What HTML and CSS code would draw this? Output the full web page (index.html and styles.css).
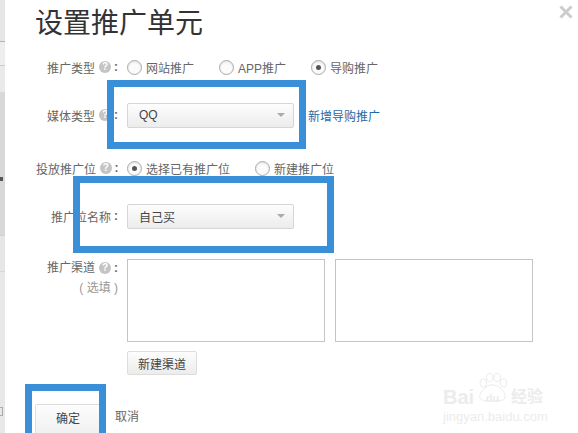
FILE: index.html
```html
<!DOCTYPE html>
<html lang="zh">
<head>
    <meta charset="UTF-8">
    <title>设置推广单元</title>
    <link rel="stylesheet" href="styles.css">
</head>
<body>
    <div class="page">
        <div class="side-strip">
            <span class="strip-part strip-a"></span>
            <span class="strip-part strip-b"></span>
            <span class="strip-part strip-c"></span>
            <span class="strip-part strip-d"><i class="strip-glyph"></i></span>
            <span class="strip-part strip-e"></span>
            <span class="strip-part strip-f"><i class="strip-glyph-box"></i></span>
        </div>

        <main class="dialog">
            <h1 class="dialog-title">设置推广单元</h1>
            <svg class="close-icon" viewBox="0 0 14 14"><path d="M1.5 1.5l11 11M12.5 1.5l-11 11"></path></svg>

            <div class="form-row row-type">
                <div class="form-label">推广类型<span class="help">?</span><span class="colon">:</span></div>
                <div class="radio-group">
                    <label class="radio-item gap-25"><span class="radio"></span>网站推广</label>
                    <label class="radio-item gap-25"><span class="radio"></span>APP推广</label>
                    <label class="radio-item"><span class="radio checked"></span>导购推广</label>
                </div>
            </div>

            <div class="form-row row-media">
                <div class="form-label">媒体类型<span class="help">?</span><span class="colon">:</span></div>
                <div class="select"><span>QQ</span><i class="caret"></i></div>
                <a class="link-new" href="#">新增导购推广</a>
            </div>

            <div class="form-row row-place">
                <div class="form-label">投放推广位<span class="help">?</span><span class="colon">:</span></div>
                <div class="radio-group">
                    <label class="radio-item gap-25"><span class="radio checked"></span>选择已有推广位</label>
                    <label class="radio-item"><span class="radio"></span>新建推广位</label>
                </div>
            </div>

            <div class="form-row row-name">
                <div class="form-label">推广位名称<span class="colon">:</span></div>
                <div class="select"><span>自己买</span><i class="caret"></i></div>
            </div>

            <div class="form-row row-channel">
                <div class="form-label label-stack">
                    <div>推广渠道<span class="help">?</span><span class="colon">:</span></div>
                    <div class="optional">( 选填 )</div>
                </div>
                <div class="channel-boxes">
                    <div class="channel-box"></div>
                    <div class="channel-box"></div>
                </div>
            </div>

            <div class="row-new-channel">
                <button class="btn btn-channel">新建渠道</button>
            </div>

            <div class="form-actions">
                <button class="btn btn-ok">确定</button>
                <a class="link-cancel" href="#">取消</a>
            </div>
        </main>

        <div class="mark mark-media"></div>
        <div class="mark mark-name"></div>
        <div class="mark mark-ok"></div>

        <div class="watermark">
            <svg class="paw" viewBox="0 0 34 32">
                <ellipse cx="7" cy="11" rx="3.5" ry="4.5"></ellipse>
                <ellipse cx="14" cy="5" rx="3.5" ry="4.5"></ellipse>
                <ellipse cx="22" cy="5" rx="3.5" ry="4.5"></ellipse>
                <ellipse cx="29" cy="11" rx="3.5" ry="4.5"></ellipse>
                <path d="M17 13c6 0 14 7 14 13 0 4-5 5-14 5S3 30 3 26c0-6 8-13 14-13z"></path>
            </svg>
            <div class="wm-brand"><span class="wm-bai">Bai</span><span class="wm-du">du</span><span class="wm-cn">经验</span></div>
            <div class="wm-url">jingyan.baidu.com</div>
        </div>
    </div>
</body>
</html>
```

FILE: styles.css
```css
* {
    margin: 0;
    padding: 0;
    box-sizing: border-box;
}

body {
    font-family: "Liberation Sans", "Noto Sans CJK SC", sans-serif;
    font-size: 12px;
    color: #666;
    background-color: #fff;
}

.page {
    position: relative;
    display: flex;
    width: 578px;
    height: 433px;
    overflow: hidden;
}

/* page behind the dialog */
.side-strip {
    display: flex;
    flex-direction: column;
    width: 5px;
    flex-shrink: 0;
}

.strip-part {
    display: block;
    position: relative;
    overflow: hidden;
}

.strip-a {
    height: 42px;
    background-color: #e6e6e6;
    border-bottom: 1px solid #b4b4b4;
}

.strip-b {
    height: 24px;
    background-color: #eeeeee;
    border-bottom: 1px solid #cdcdcd;
}

.strip-c {
    height: 26px;
    background-color: #eaeaea;
}

.strip-d {
    height: 143px;
    background-color: #d8d8d8;
}

.strip-e {
    height: 37px;
    background-color: #e6e6e6;
    border-top: 1px solid #d0d0d0;
    border-bottom: 1px solid #d8d8d8;
}

.strip-f {
    flex: 1;
    background-color: #e8e8e8;
}

.strip-glyph {
    position: absolute;
    top: 85px;
    left: 0;
    width: 3px;
    height: 4px;
    background-color: #555;
}

.strip-glyph-box {
    position: absolute;
    top: 135px;
    left: 0;
    width: 3px;
    height: 9px;
    border: 1px solid #aaa;
    border-left: 0;
}

.dialog {
    position: relative;
    flex: 1;
    padding-left: 31px;
}

.dialog-title {
    height: 47px;
    padding-top: 4px;
    margin-left: -1px;
    font-size: 28px;
    font-weight: 400;
    line-height: 40px;
    color: #333;
}

.close-icon {
    position: absolute;
    top: 5px;
    right: 5px;
    width: 14px;
    height: 14px;
    fill: none;
    stroke: #ccc;
    stroke-width: 3;
}

.form-row {
    display: flex;
    align-items: center;
}

.form-label {
    display: flex;
    justify-content: flex-end;
    align-items: center;
    width: 91px;
    flex-shrink: 0;
    white-space: nowrap;
}

.help {
    display: inline-block;
    width: 12px;
    height: 12px;
    margin-left: 4px;
    border-radius: 50%;
    background-color: #c4c4c4;
    color: #fff;
    font-size: 10px;
    font-weight: 700;
    line-height: 12px;
    text-align: center;
}

.colon {
    width: 13px;
    margin-left: 3px;
    font-weight: 700;
    text-align: left;
}

.row-type {
    height: 20px;
    margin-top: 10px;
}

.row-media {
    height: 26px;
    margin-top: 25px;
}

.row-place {
    height: 20px;
    margin-top: 30px;
}

.row-name {
    height: 26px;
    margin-top: 25px;
}

.row-channel {
    align-items: flex-start;
    margin-top: 30px;
}

.label-stack {
    display: block;
    text-align: right;
    line-height: 18px;
}

.label-stack > div:first-child {
    display: flex;
    justify-content: flex-end;
    align-items: center;
}

.optional {
    margin-top: 2px;
    padding-right: 9px;
    color: #999;
}

.radio-group {
    display: flex;
    align-items: center;
}

.radio-item {
    display: flex;
    align-items: center;
    gap: 4px;
    white-space: nowrap;
}

.gap-25 {
    margin-right: 25px;
}

.radio {
    display: block;
    width: 15px;
    height: 15px;
    border: 1px solid #aaa;
    border-radius: 50%;
    background-color: #fbfbfb;
    box-shadow: inset 0 1px 2px rgba(0,0,0,0.12);
    position: relative;
}

.radio.checked::after {
    content: "";
    position: absolute;
    top: 4px;
    left: 4px;
    width: 5px;
    height: 5px;
    border-radius: 50%;
    background-color: #555;
}

.select {
    display: flex;
    justify-content: space-between;
    align-items: center;
    width: 167px;
    height: 25px;
    padding: 0 8px 0 11px;
    border: 1px solid #d6d6d6;
    border-radius: 2px;
    background: linear-gradient(#fdfdfd, #ececec);
    color: #444;
    font-size: 12px;
}

.caret {
    width: 0;
    height: 0;
    border-top: 4px solid #aaa;
    border-left: 4px solid transparent;
    border-right: 4px solid transparent;
}

.link-new {
    margin-left: 14px;
    color: #1f6aa5;
    text-decoration: none;
}

.channel-boxes {
    display: flex;
    gap: 10px;
}

.channel-box {
    width: 198px;
    height: 83px;
    border: 1px solid #c4c4c4;
    background-color: #fff;
}

.btn {
    font-family: inherit;
    font-size: 12px;
    color: #444;
    border: 1px solid #ddd;
    border-radius: 2px;
    background: linear-gradient(#fdfdfd, #ececec);
}

.row-new-channel {
    margin-top: 9px;
    padding-left: 91px;
}

.btn-channel {
    display: block;
    width: 70px;
    height: 24px;
}

.form-actions {
    display: flex;
    align-items: flex-start;
    margin-top: 29px;
    margin-left: -1px;
}

.btn-ok {
    width: 66px;
    height: 40px;
    padding-bottom: 14px;
}

.link-cancel {
    margin-left: 14px;
    margin-top: 3px;
    color: #666;
    text-decoration: none;
}

/* blue annotation frames drawn over the screenshot */
.mark {
    position: absolute;
    border: 7px solid #3a8fd9;
    pointer-events: none;
}

.mark-media {
    top: 80px;
    left: 107px;
    width: 199px;
    height: 69px;
}

.mark-name {
    top: 176px;
    left: 73px;
    width: 261px;
    height: 77px;
}

.mark-ok {
    top: 384px;
    left: 25px;
    width: 81px;
    height: 60px;
}

.watermark {
    position: absolute;
    left: 443px;
    top: 372px;
    width: 104px;
    color: #ececec;
}

.paw {
    position: absolute;
    left: 34px;
    top: 0;
    width: 31px;
    height: 31px;
    fill: #fff;
    stroke: #e8e8e8;
    stroke-width: 1;
}

.wm-brand {
    position: relative;
    display: flex;
    align-items: center;
    padding-top: 13px;
    font-size: 20px;
    font-weight: 700;
    line-height: 20px;
}

.wm-bai {
    width: 34px;
}

.wm-du {
    width: 31px;
    padding-top: 3px;
    font-size: 11px;
    text-align: center;
}

.wm-cn {
    margin-left: 3px;
    font-size: 16px;
}

.wm-url {
    font-size: 13px;
    line-height: 14px;
    margin-top: 2px;
    white-space: nowrap;
}
```
